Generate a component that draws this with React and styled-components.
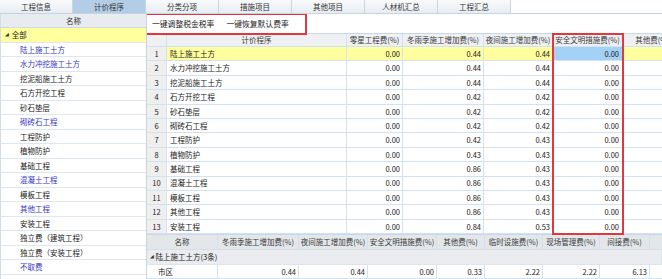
import styled, { createGlobalStyle } from "styled-components";

const GlobalStyle = createGlobalStyle`
  body {
    margin: 0;
    background: #fff;
  }
  * {
    box-sizing: border-box;
  }
`;

const Page = styled.div`
  position: relative;
  display: flex;
  flex-direction: column;
  width: 662px;
  height: 279px;
  overflow: hidden;
  background: #fff;
  color: #222;
  font-family: "Noto Sans CJK SC", "Noto Sans", sans-serif;
  font-size: 7.5px;
  line-height: 1;
`;

const TabBar = styled.div`
  display: flex;
  flex-shrink: 0;
  height: 14px;
  border-bottom: 1px solid #c3d4e5;
`;

const Tab = styled.div`
  display: flex;
  align-items: center;
  justify-content: center;
  width: 73px;
  color: #333;
  background: ${({ active }) => (active ? "#b3cde6" : "linear-gradient(#f8fafc, #e8edf2)")};
  border-right: 1px solid #cbd5df;
`;

const Body = styled.div`
  display: flex;
  flex: 1;
  min-height: 0;
`;

const LeftPanel = styled.div`
  flex-shrink: 0;
  width: 147px;
  border-left: 1px solid #d3dde7;
  border-right: 1px solid #c7d4e1;
`;

const LeftHeader = styled.div`
  display: flex;
  align-items: center;
  justify-content: center;
  height: 14px;
  color: #333;
  background: #e8ecf0;
  border-bottom: 1px solid #d0dae4;
`;

const LeftRow = styled.div`
  display: flex;
  align-items: center;
  gap: 3px;
  height: 14.5px;
  padding-left: ${({ indent }) => indent}px;
  color: ${({ blue }) => (blue ? "#3434c4" : "#222")};
  background: ${({ active }) => (active ? "#ffff9e" : "#fff")};
  border-bottom: 1px solid #dde7f0;
`;

const Caret = styled.span`
  font-family: "DejaVu Sans", sans-serif;
  font-size: 5px;
  color: #333;
`;

const Main = styled.div`
  display: flex;
  flex-direction: column;
  flex: 1;
  min-width: 0;
  overflow: hidden;
`;

const Toolbar = styled.div`
  display: flex;
  flex-shrink: 0;
  height: 19px;
`;

const ToolGroup = styled.div`
  position: relative;
  z-index: 2;
  display: flex;
  align-items: center;
  gap: 12px;
  width: 164px;
  height: 22px;
  margin: -1px 0 0 -4px;
  padding-left: 7px;
  font-size: 7.8px;
  color: #222;
  border: 2px solid #e0383d;
`;

const GridWrap = styled.div`
  position: relative;
  flex-shrink: 0;
  border-top: 1px solid #c8d8e8;
`;

const Row = styled.div`
  display: grid;
  grid-template-columns: ${({ cols }) => cols};
  height: ${({ h }) => h}px;
  background: ${({ bg }) => bg || "#fff"};
`;

const Cell = styled.div`
  display: flex;
  align-items: center;
  justify-content: ${({ align }) => align || "flex-start"};
  padding: 0 ${({ pad }) => (pad === undefined ? 3 : pad)}px;
  overflow: hidden;
  white-space: nowrap;
  color: ${({ head }) => (head ? "#3a3a3a" : "#222")};
  background: ${({ bg }) => bg || "transparent"};
  border-right: 1px solid ${({ line }) => line || "#d3e2f0"};
  border-bottom: 1px solid ${({ line }) => line || "#d3e2f0"};
`;

const ColumnMark = styled.div`
  position: absolute;
  z-index: 3;
  top: -1px;
  left: 405px;
  width: 72px;
  height: 202px;
  border: 2px solid #e0383d;
  pointer-events: none;
`;

const LowerWrap = styled.div`
  flex-shrink: 0;
  border-top: 1px solid #c8d8e8;
`;

const tabs = ["工程信息", "计价程序", "分类分项", "措施项目", "其他项目", "人材机汇总", "工程汇总"];

const tree = [
  { t: "陆上施工土方", blue: true },
  { t: "水力冲挖施工土方", blue: true },
  { t: "挖泥船施工土方" },
  { t: "石方开挖工程" },
  { t: "砂石垫层" },
  { t: "砌砖石工程", blue: true },
  { t: "工程防护" },
  { t: "植物防护" },
  { t: "基础工程" },
  { t: "混凝土工程", blue: true },
  { t: "模板工程" },
  { t: "其他工程", blue: true },
  { t: "安装工程" },
  { t: "独立费（建筑工程）" },
  { t: "独立费（安装工程）" },
  { t: "不取费", blue: true },
];

const rates = [
  ["0.44", "0.44"],
  ["0.44", "0.44"],
  ["0.44", "0.44"],
  ["0.42", "0.42"],
  ["0.42", "0.42"],
  ["0.42", "0.42"],
  ["0.42", "0.43"],
  ["0.43", "0.43"],
  ["0.86", "0.43"],
  ["0.86", "0.43"],
  ["0.86", "0.43"],
  ["0.86", "0.43"],
  ["0.84", "0.53"],
];

const MAIN_COLS = "20px 180px 56px 81px 69px 70px 60px";
const LOWER_COLS = "71px 81px 69px 69px 48px 58px 57px 50px 60px";
const YELLOW = "#ffff9e";

const mainHead = ["", "计价程序", "零星工程费(%)", "冬雨季施工增加费(%)", "夜间施工增加费(%)", "安全文明措施费(%)", "其他费(%)"];
const lowerHead = ["名称", "冬雨季施工增加费(%)", "夜间施工增加费(%)", "安全文明措施费(%)", "其他费(%)", "临时设施费(%)", "现场管理费(%)", "间接费(%)", ""];
const lowerValues = ["0.44", "0.44", "0.00", "0.33", "2.22", "2.22", "6.13", ""];

function App() {
  return (
    <Page>
      <GlobalStyle />
      <TabBar>
        {tabs.map((t) => (
          <Tab key={t} active={t === "计价程序"}>
            {t}
          </Tab>
        ))}
      </TabBar>

      <Body>
        <LeftPanel>
          <LeftHeader>名称</LeftHeader>
          <LeftRow indent={4} active>
            <Caret>◢</Caret>全部
          </LeftRow>
          {tree.map((item) => (
            <LeftRow key={item.t} indent={19} blue={item.blue}>
              {item.t}
            </LeftRow>
          ))}
        </LeftPanel>

        <Main>
          <Toolbar>
            <ToolGroup>
              <span>一键调整税金税率</span>
              <span>一键恢复默认费率</span>
            </ToolGroup>
          </Toolbar>

          <GridWrap>
            <Row cols={MAIN_COLS} h={13} bg="#eef0f3">
              {mainHead.map((h, i) => (
                <Cell key={i} head align="center" pad={1}>
                  {h}
                </Cell>
              ))}
            </Row>
            {tree.slice(0, 13).map((item, i) => {
              const first = i === 0;
              const bg = first ? YELLOW : undefined;
              return (
                <Row key={item.t} cols={MAIN_COLS} h={14.4}>
                  <Cell align="center" bg="#efefef">
                    {i + 1}
                  </Cell>
                  <Cell bg={bg}>{item.t}</Cell>
                  <Cell align="flex-end" pad={2} bg={bg}>
                    0.00
                  </Cell>
                  <Cell align="flex-end" pad={2} bg={bg}>
                    {rates[i][0]}
                  </Cell>
                  <Cell align="flex-end" pad={2} bg={bg}>
                    {rates[i][1]}
                  </Cell>
                  <Cell align="flex-end" pad={3} bg={first ? "#a3d2f6" : undefined}>
                    0.00
                  </Cell>
                  <Cell bg={bg} />
                </Row>
              );
            })}
            <ColumnMark />
          </GridWrap>

          <LowerWrap>
            <Row cols={LOWER_COLS} h={15} bg="#e4e7ea">
              {lowerHead.map((h, i) => (
                <Cell key={i} head align="center" pad={1} line="#d4dfea">
                  {h}
                </Cell>
              ))}
            </Row>
            <Row cols="1fr" h={14.5} bg="#eaecef">
              <Cell line="#dde4eb">
                <Caret>◢</Caret>&nbsp;陆上施工土方(3条)
              </Cell>
            </Row>
            <Row cols={LOWER_COLS} h={14.5}>
              <Cell pad={11}>市区</Cell>
              {lowerValues.map((v, i) => (
                <Cell key={i} align="flex-end" pad={2}>
                  {v}
                </Cell>
              ))}
            </Row>
          </LowerWrap>
        </Main>
      </Body>
    </Page>
  );
}

export default App;
